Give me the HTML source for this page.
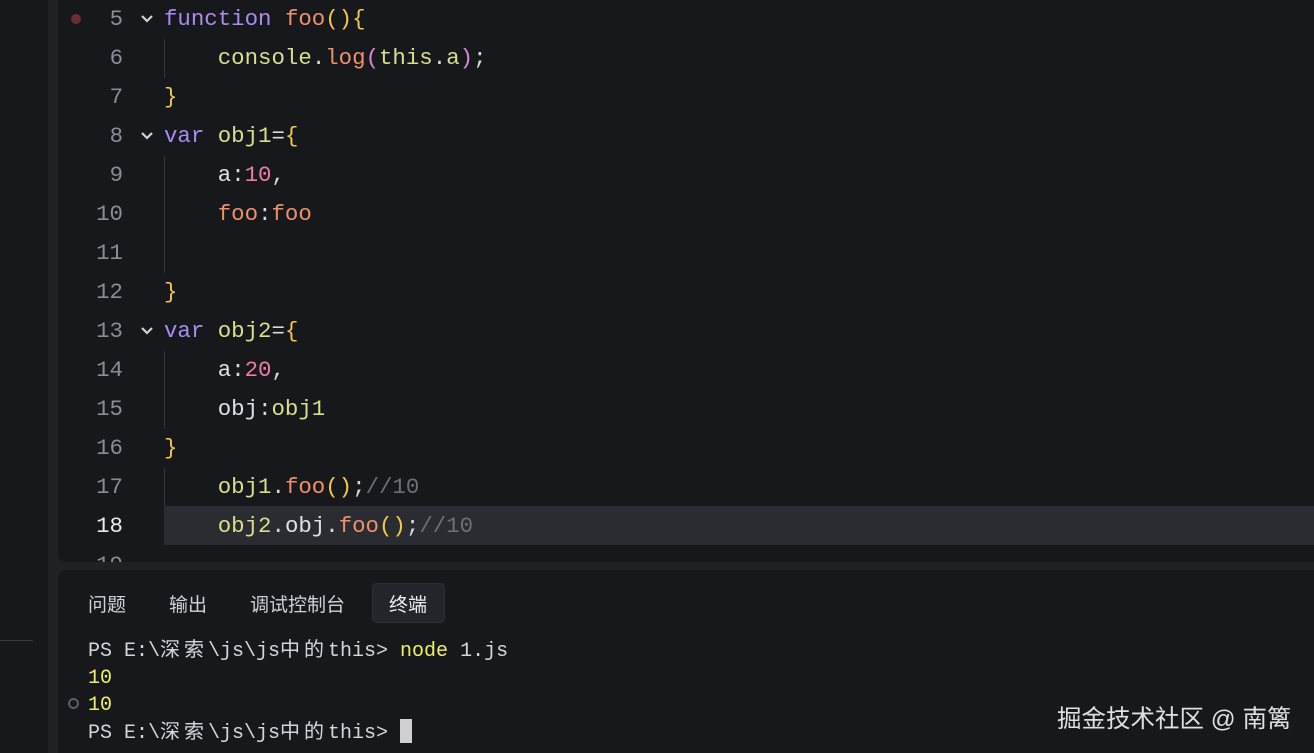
<!DOCTYPE html>
<html><head><meta charset="utf-8"><style>
*{margin:0;padding:0;box-sizing:border-box}
body{width:1314px;height:753px;background:#1f2125;overflow:hidden;position:relative;font-family:"Liberation Mono","Noto Sans CJK SC",monospace}
.side{position:absolute;left:0;top:0;width:48px;height:753px;background:#17181c}
.sep{position:absolute;left:0;top:640px;width:33px;height:1px;background:#3a3c42}
.ed{position:absolute;left:58px;top:0;width:1256px;height:562px;background:#17181c;border-radius:0 0 0 8px;overflow:hidden}
.pn{position:absolute;left:58px;top:570px;width:1256px;height:183px;background:#17181c;border-radius:8px 0 0 0}
.ln{position:absolute;left:0;height:39px;line-height:39px;font-size:22.4px;white-space:pre;width:1256px}
.num{position:absolute;right:1191px;color:#8a8d94;text-align:right}
.code{position:absolute;left:106px;color:#d7d9de}
.chev{position:absolute;left:82px;top:13px}
.kw{color:#a98cf0}.fn{color:#f0906a}.br{color:#f2c94c}.var{color:#d8df8e}.nm{color:#f07aa8}.pp{color:#d68bd8}.cm{color:#6c6f77}.pl{color:#dfe1e6}
.guide{position:absolute;left:106px;width:1px;background:#34363c}
.tab{position:absolute;top:20px;font-size:19px;color:#d0d2d8;font-family:"Liberation Sans","Noto Sans CJK SC",sans-serif}
.t{position:absolute;left:30px;font-size:20px;line-height:27px;color:#d4d6db;white-space:pre}
.c{letter-spacing:4px}
</style></head><body>
<div class="side"></div><div class="sep"></div>
<div class="ed">
<div class="guide" style="top:39px;height:39px"></div>
<div class="guide" style="top:156px;height:117px"></div>
<div class="guide" style="top:351px;height:78px"></div>
<div class="guide" style="top:468px;height:39px"></div>
<div style="position:absolute;left:106px;top:506px;width:1150px;height:39px;background:#2a2c31"></div>
<div style="position:absolute;left:13px;top:14px;width:10px;height:10px;border-radius:50%;background:#6b2f33"></div>
<div class="ln" style="top:0"><span class="num">5</span><svg class="chev" width="14" height="12" viewBox="0 0 14 12"><polyline points="2,3 7,8 12,3" fill="none" stroke="#d0d2d8" stroke-width="2.2"/></svg><span class="code"><span class="kw">function</span> <span class="fn">foo</span><span class="br">(){</span></span></div>
<div class="ln" style="top:39px"><span class="num">6</span><span class="code">    <span class="var">console</span>.<span class="fn">log</span><span class="pp">(</span><span class="var">this</span>.<span class="var">a</span><span class="pp">)</span>;</span></div>
<div class="ln" style="top:78px"><span class="num">7</span><span class="code"><span class="br">}</span></span></div>
<div class="ln" style="top:117px"><span class="num">8</span><svg class="chev" width="14" height="12" viewBox="0 0 14 12"><polyline points="2,3 7,8 12,3" fill="none" stroke="#d0d2d8" stroke-width="2.2"/></svg><span class="code"><span class="kw">var</span> <span class="var">obj1</span>=<span class="br">{</span></span></div>
<div class="ln" style="top:156px"><span class="num">9</span><span class="code">    <span class="pl">a</span>:<span class="nm">10</span>,</span></div>
<div class="ln" style="top:195px"><span class="num">10</span><span class="code">    <span class="fn">foo</span>:<span class="fn">foo</span></span></div>
<div class="ln" style="top:234px"><span class="num">11</span></div>
<div class="ln" style="top:273px"><span class="num">12</span><span class="code"><span class="br">}</span></span></div>
<div class="ln" style="top:312px"><span class="num">13</span><svg class="chev" width="14" height="12" viewBox="0 0 14 12"><polyline points="2,3 7,8 12,3" fill="none" stroke="#d0d2d8" stroke-width="2.2"/></svg><span class="code"><span class="kw">var</span> <span class="var">obj2</span>=<span class="br">{</span></span></div>
<div class="ln" style="top:351px"><span class="num">14</span><span class="code">    <span class="pl">a</span>:<span class="nm">20</span>,</span></div>
<div class="ln" style="top:390px"><span class="num">15</span><span class="code">    <span class="pl">obj</span>:<span class="var">obj1</span></span></div>
<div class="ln" style="top:429px"><span class="num">16</span><span class="code"><span class="br">}</span></span></div>
<div class="ln" style="top:468px"><span class="num">17</span><span class="code">    <span class="var">obj1</span>.<span class="fn">foo</span><span class="br">()</span>;<span class="cm">//10</span></span></div>
<div class="ln" style="top:507px"><span class="num" style="color:#e8eaee">18</span><span class="code">    <span class="var">obj2</span>.<span class="pl">obj</span>.<span class="fn">foo</span><span class="br">()</span>;<span class="cm">//10</span></span></div>
<div class="ln" style="top:546px"><span class="num">19</span></div>
</div>
<div class="pn">
<span class="tab" style="left:30px">问题</span>
<span class="tab" style="left:111px">输出</span>
<span class="tab" style="left:192px">调试控制台</span>
<div style="position:absolute;left:314px;top:13px;width:73px;height:40px;background:#23252a;border:1px solid #2e3035;border-radius:5px"></div>
<span class="tab" style="left:331px;color:#eceef2">终端</span>
<div class="t" style="top:68px">PS E:\<span class="c">深索</span>\js\js<span class="c">中的</span>this&gt; <span style="color:#eef06a">node</span> 1.js</div>
<div class="t" style="top:95px;color:#eef06a">10</div>
<div class="t" style="top:122px;color:#eef06a">10</div>
<div style="position:absolute;left:10px;top:128px;width:11px;height:11px;border:2px solid #5a5d63;border-radius:50%"></div>
<div class="t" style="top:149px">PS E:\<span class="c">深索</span>\js\js<span class="c">中的</span>this&gt; <span style="display:inline-block;width:12px;height:24px;background:#d0d0d0;vertical-align:-5px"></span></div>
<div style="position:absolute;left:999px;top:130px;font-size:24.5px;color:#e0e0e0;font-family:'Liberation Sans','Noto Sans CJK SC',sans-serif">掘金技术社区 @ 南篱</div>
</div>
</body></html>
